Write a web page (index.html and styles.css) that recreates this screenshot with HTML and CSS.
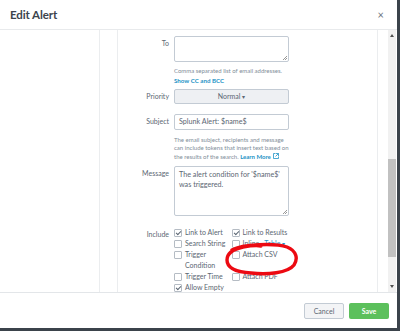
FILE: index.html
```html
<!DOCTYPE html>
<html>
<head>
<meta charset="utf-8">
<link rel="stylesheet" href="styles.css">
</head>
<body>
<div class="modal">
  <div class="header">
    <span class="title">Edit Alert</span>
    <span class="close">×</span>
  </div>
  <div class="main">
    <div class="side"></div>
    <div class="gutter"></div>
    <div class="form">
      <div class="row r-to">
        <div class="label">To</div>
        <div class="field">
          <div class="textarea to"><span class="grip"></span></div>
          <div class="help h-to">Comma separated list of email addresses.</div>
          <div class="link">Show CC and BCC</div>
        </div>
      </div>
      <div class="row r-pri">
        <div class="label">Priority</div>
        <div class="field"><div class="btn">Normal <span class="caret">▾</span></div></div>
      </div>
      <div class="row r-sub">
        <div class="label">Subject</div>
        <div class="field">
          <div class="input">Splunk Alert: $name$</div>
          <div class="help h-sub">The email subject, recipients and message can include tokens that insert text based on the results of the search. <span class="link inline">Learn More</span><svg class="ext" width="6" height="6" viewBox="0 0 6 6"><path d="M2.5 0.5H0.5V5.5H5.5V3.5M3 0.5H5.5V3M5.5 0.5L2.5 3.5" fill="none" stroke="#1e93c6" stroke-width="0.8"/></svg></div>
        </div>
      </div>
      <div class="row r-msg">
        <div class="label">Message</div>
        <div class="field">
          <div class="textarea msg">The alert condition for '$name$' was triggered.<span class="grip"></span></div>
        </div>
      </div>
      <div class="row">
        <div class="label">Include</div>
        <div class="field checks">
          <div class="col">
            <div class="cb"><span class="box on"></span><span>Link to Alert</span></div>
            <div class="cb"><span class="box"></span><span>Search String</span></div>
            <div class="cb"><span class="box"></span><span>Trigger<br>Condition</span></div>
            <div class="cb"><span class="box"></span><span>Trigger Time</span></div>
            <div class="cb"><span class="box on"></span><span>Allow Empty</span></div>
          </div>
          <div class="col">
            <div class="cb"><span class="box on"></span><span>Link to Results</span></div>
            <div class="cb"><span class="box"></span><span>Inline</span><span class="link tbl">Table <span class="caret">▾</span></span></div>
            <div class="cb"><span class="box"></span><span>Attach CSV</span></div>
            <div class="cb spacer"></div>
            <div class="cb"><span class="box"></span><span>Attach PDF</span></div>
          </div>
        </div>
      </div>
      <svg class="circle" width="74" height="34" viewBox="0 0 74 34">
        <path d="M7 8 C18 2 50 1 62 5 C72 9 73 17 69 23 C63 31 42 33 26 31 C10 30 2 25 2 18 C2 11 9 7 18 5 C24 4 30 3 36 4" fill="none" stroke="#ec0a12" stroke-width="3.4" stroke-linecap="round"/>
      </svg>
    </div>
    <div class="pad"></div>
    <div class="scroll">
      <span class="arr up"></span>
      <div class="track"><div class="thumb"></div></div>
      <span class="arr down"></span>
    </div>
  </div>
  <div class="footer">
    <div class="b cancel">Cancel</div>
    <div class="b save">Save</div>
  </div>
</div>
</body>
</html>
```
FILE: styles.css
```css
html, body { margin: 0; padding: 0; }
body { background: #3b434b; width: 400px; height: 331px; overflow: hidden; font-family: Lato, "Open Sans", sans-serif; }
.modal { width: 397px; height: 328px; background: #fff; display: flex; flex-direction: column; }
.header { height: 30px; border-bottom: 1px solid #e8eaec; display: flex; align-items: center; justify-content: space-between; padding: 0 13px 0 10px; box-sizing: border-box; flex: none; }
.title { font-size: 11.5px; font-weight: 700; color: #3c444d; letter-spacing: -0.1px; }
.close { font-size: 11px; color: #6b7480; }
.main { flex: 1; display: flex; overflow: hidden; min-height: 0; }
.side { width: 99px; border-right: 1px solid #ebedef; flex: none; }
.gutter { width: 17px; border-right: 1px solid #ebedef; flex: none; }
.form { width: 260px; border-right: 1px solid #ebedef; flex: none; position: relative; padding-top: 6px; box-sizing: border-box; }
.pad { width: 10px; flex: none; }
.scroll { width: 8px; background: #f1f1f1; flex: none; display: flex; flex-direction: column; align-items: center; }
.track { flex: 1; width: 8px; position: relative; }
.thumb { position: absolute; left: 0; right: 0; top: 118px; height: 98px; background: #c1c1c1; }
.arr { width: 0; height: 0; border-left: 2.5px solid transparent; border-right: 2.5px solid transparent; margin: 4px 0; }
.arr.up { border-bottom: 3px solid #505050; }
.arr.down { border-top: 3px solid #505050; }
.row { display: flex; gap: 5px; }
.r-to { margin-bottom: 4px; }
.r-pri { margin-bottom: 10px; }
.r-sub { margin-bottom: 5px; }
.r-msg { margin-bottom: 11px; }
.label { width: 51px; text-align: right; font-size: 7px; color: #5c6773; padding-top: 3px; flex: none; }
.field { width: 115px; flex: none; }
.textarea, .input { border: 1px solid #c3cbd4; border-radius: 2px; box-sizing: border-box; position: relative; font-size: 7.2px; color: #5c6773; }
.to { height: 26px; }
.msg { height: 50px; padding: 3px 4px; line-height: 9.5px; }
.input { height: 16px; padding: 0 4px; line-height: 14px; }
.grip { position: absolute; right: 1px; bottom: 1px; width: 4px; height: 4px; background: linear-gradient(135deg, transparent 45%, #999 45%, #999 55%, transparent 55%, transparent 75%, #999 75%, #999 85%, transparent 85%); }
.help { font-size: 6px; color: #818d99; line-height: 8.5px; }
.h-to { margin-top: 5px; }
.h-sub { margin-top: 6px; }
.link { font-size: 6.2px; color: #1e93c6; font-weight: 700; line-height: 9px; }
.link.inline { font-size: 6px; line-height: 8.5px; }
.ext { margin-left: 2px; vertical-align: -0.5px; }
.btn { height: 15px; border: 1px solid #c3cbd4; border-radius: 2px; background: #eef0f3; box-sizing: border-box; text-align: center; font-size: 7px; color: #5c6773; line-height: 13px; }
.caret { font-size: 6px; }
.checks { display: flex; }
.col { width: 60px; }
.cb { display: flex; align-items: flex-start; font-size: 7px; color: #5c6773; line-height: 11px; }
.cb.spacer { height: 11px; }
.box { width: 8px; height: 8px; border: 1px solid #b5bcc4; border-radius: 1px; box-sizing: border-box; margin: 1.5px 3px 0 0; flex: none; position: relative; }
.box.on::after { content: ""; position: absolute; left: 2px; top: 0px; width: 2px; height: 4px; border-right: 1px solid #5c6773; border-bottom: 1px solid #5c6773; transform: rotate(45deg); }
.tbl { margin-left: 5px; font-size: 7px; font-weight: 400; line-height: 11px; }
.circle { position: absolute; left: 107px; top: 212px; }
.footer { height: 36px; border-top: 1px solid #e3e6e9; display: flex; justify-content: flex-end; align-items: center; gap: 5px; padding-right: 8px; flex: none; box-sizing: border-box; }
.b { height: 16px; width: 40px; border-radius: 2px; font-size: 7px; display: flex; align-items: center; justify-content: center; box-sizing: border-box; }
.cancel { border: 1px solid #c3cbd4; background: #f3f4f6; color: #5c6773; }
.save { background: #5cc05c; color: #fff; font-weight: 700; }
```
